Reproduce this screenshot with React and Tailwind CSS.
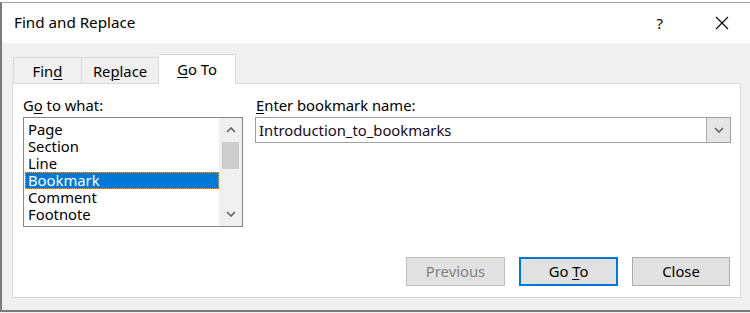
import React from "react";

const font = { fontFamily: '"Noto Sans", "Open Sans", sans-serif' };

function U({ children }) {
  return <span className="underline underline-offset-2 decoration-1">{children}</span>;
}

function Chevron({ up = false, className = "" }) {
  return (
    <svg width="10" height="6" viewBox="0 0 10 6" className={className}>
      <path
        d={up ? "M1 5 L5 1 L9 5" : "M1 1 L5 5 L9 1"}
        fill="none"
        stroke="#606060"
        strokeWidth="1.6"
      />
    </svg>
  );
}

export default function App() {
  const items = ["Page", "Section", "Line", "Bookmark", "Comment", "Footnote"];

  return (
    <div
      className="w-[750px] h-[313px] overflow-hidden bg-[#f0f0f0] text-[#000]"
      style={font}
    >
      <div className="h-[2px] bg-white" />
      {/* Window */}
      <div className="w-[770px] h-[310px] flex flex-col border-t border-t-[#a6a6a6] border-l-2 border-l-[#7a7a7a] border-b-2 border-b-[#7a7a7a]">
        {/* Title bar */}
        <div className="h-[40px] bg-white flex items-center shrink-0">
          <span className="ml-[12px] text-[15.2px] leading-none">Find and Replace</span>
          <span className="ml-auto mr-[52px] text-[15px] leading-none">?</span>
          <svg width="14" height="14" viewBox="0 0 14 14" className="mr-[41px]">
            <path d="M1 1 L13 13 M13 1 L1 13" stroke="#000" strokeWidth="1.1" />
          </svg>
        </div>

        {/* Body */}
        <div className="flex-1 bg-[#f0f0f0] flex flex-col">
          {/* Tabs */}
          <div className="flex items-end ml-[11px] mt-[11px] h-[29px] text-[14.8px]">
            <div className="w-[69px] h-[26px] border border-b-0 border-[#d9d9d9] bg-[#f0f0f0] flex items-center justify-center pt-px">
              <span>
                Fin<U>d</U>
              </span>
            </div>
            <div className="w-[77px] h-[26px] border border-b-0 border-l-0 border-[#d9d9d9] bg-[#f0f0f0] flex items-center justify-center pt-px">
              <span>
                Re<U>p</U>lace
              </span>
            </div>
            <div className="relative z-10 w-[77px] h-[30px] -mb-px border border-b-0 border-l-0 border-[#d9d9d9] bg-white flex items-center justify-center">
              <span>
                <U>G</U>o To
              </span>
            </div>
          </div>

          {/* Panel */}
          <div className="ml-[10px] w-[729px] h-[215px] bg-white border border-[#d9d9d9] flex flex-col text-[14.8px]">
            <div className="flex pt-[11px] pl-[10px]">
              {/* Left column */}
              <div className="flex flex-col w-[220px]">
                <div className="h-[20px] leading-[20px]">
                  G<U>o</U> to what:
                </div>
                <div className="mt-[2px] h-[110px] border border-[#828790] flex">
                  <div className="flex-1 pt-[3px] pl-px">
                    {items.map((it) => (
                      <div
                        key={it}
                        className={
                          "h-[17px] leading-[17px] pl-[3px] " +
                          (it === "Bookmark"
                            ? "bg-[#0078d7] text-white outline-1 outline-dotted outline-[#f7a128] -outline-offset-1"
                            : "")
                        }
                      >
                        {it}
                      </div>
                    ))}
                  </div>
                  <div className="w-[23px] bg-[#f0f0f0] flex flex-col items-center">
                    <div className="h-[24px] flex items-center justify-center">
                      <Chevron up />
                    </div>
                    <div className="w-[17px] h-[27px] bg-[#cdcdcd]" />
                    <div className="flex-1" />
                    <div className="h-[24px] flex items-center justify-center">
                      <Chevron />
                    </div>
                  </div>
                </div>
              </div>

              {/* Right column */}
              <div className="flex flex-col ml-[12px] w-[476px]">
                <div className="h-[20px] leading-[20px] pl-px">
                  <U>E</U>nter bookmark name:
                </div>
                <div className="mt-[2px] h-[26px] border border-[#a0a0a0] flex items-stretch">
                  <div className="flex-1 pl-[3px] leading-[24px] text-[#1a0a25]">
                    Introduction_to_bookmarks
                  </div>
                  <div className="w-[24px] bg-[#e5e5e5] border-l border-[#acacac] flex items-center justify-center">
                    <Chevron />
                  </div>
                </div>
              </div>
            </div>

            {/* Buttons */}
            <div className="mt-auto mb-[11px] mr-[10px] flex justify-end gap-[14px]">
              <div className="w-[99px] h-[29px] bg-[#e1e1e1] border border-[#bfbfbf] text-[#838383] flex items-center justify-center">
                <span>Previous</span>
              </div>
              <div className="w-[99px] h-[29px] bg-[#e1e1e1] border-2 border-[#0078d7] flex items-center justify-center">
                <span>
                  Go <U>T</U>o
                </span>
              </div>
              <div className="w-[98px] h-[29px] bg-[#e1e1e1] border border-[#adadad] flex items-center justify-center">
                <span>Close</span>
              </div>
            </div>
          </div>
        </div>
      </div>
    </div>
  );
}
